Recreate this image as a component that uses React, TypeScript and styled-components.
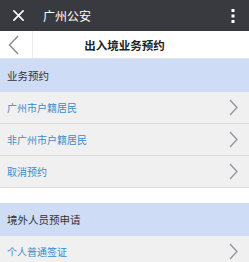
import styled, { createGlobalStyle } from "styled-components";

const GlobalStyle = createGlobalStyle`
  html, body {
    margin: 0;
    padding: 0;
    background: #ffffff;
  }
  body {
    font-family: "Noto Sans CJK SC", "Noto Sans", sans-serif;
  }
`;

type Item = { label: string };

const groups: { title: string; items: Item[] }[] = [
  {
    title: "业务预约",
    items: [{ label: "广州市户籍居民" }, { label: "非广州市户籍居民" }, { label: "取消预约" }],
  },
  {
    title: "境外人员预申请",
    items: [{ label: "个人普通签证" }],
  },
];

export default function App() {
  return (
    <Page>
      <GlobalStyle />
      <TopBar>
        <CloseIcon viewBox="0 0 12 12">
          <path d="M1 1 L11 11 M11 1 L1 11" stroke="#fff" strokeWidth="1.8" strokeLinecap="round" />
        </CloseIcon>
        <AppTitle>广州公安</AppTitle>
        <MoreIcon viewBox="0 0 4 16">
          <rect x="0.5" y="1" width="3" height="3" fill="#fff" />
          <rect x="0.5" y="6.5" width="3" height="3" fill="#fff" />
          <rect x="0.5" y="12" width="3" height="3" fill="#fff" />
        </MoreIcon>
      </TopBar>
      <NavBar>
        <BackButton>
          <svg width="11" height="20" viewBox="0 0 11 20">
            <path d="M10 1 L1.5 10 L10 19" fill="none" stroke="#8a8a8a" strokeWidth="1.4" />
          </svg>
        </BackButton>
        <NavTitle>出入境业务预约</NavTitle>
        <NavSpacer />
      </NavBar>
      {groups.map((group, gi) => (
        <Group key={group.title} $first={gi === 0}>
          <GroupHeader>{group.title}</GroupHeader>
          {group.items.map((item) => (
            <Row key={item.label}>
              <RowLabel>{item.label}</RowLabel>
              <svg width="9" height="17" viewBox="0 0 9 17">
                <path d="M1 1 L8 8.5 L1 16" fill="none" stroke="#8f949c" strokeWidth="1.3" />
              </svg>
            </Row>
          ))}
        </Group>
      ))}
    </Page>
  );
}

const Page = styled.div`
  width: 249px;
  height: 262px;
  overflow: hidden;
  background: #ffffff;
`;

const TopBar = styled.div`
  height: 31px;
  background: #393a3f;
  display: flex;
  align-items: center;
  padding: 0 14px 0 13px;
`;

const CloseIcon = styled.svg`
  width: 11px;
  height: 11px;
  flex: none;
`;

const AppTitle = styled.div`
  margin-left: 19px;
  flex: 1;
  color: #ffffff;
  font-size: 12px;
  line-height: 1;
`;

const MoreIcon = styled.svg`
  width: 4px;
  height: 16px;
  flex: none;
`;

const NavBar = styled.div`
  height: 27px;
  display: flex;
  align-items: center;
  background: #ffffff;
  border-bottom: 1px solid #e2e2e2;
`;

const BackButton = styled.div`
  width: 33px;
  height: 100%;
  display: flex;
  align-items: center;
  padding-left: 8px;
  box-sizing: border-box;
  border-right: 1px solid #ececec;
`;

const NavTitle = styled.div`
  flex: 1;
  text-align: center;
  font-size: 11.5px;
  font-weight: 700;
  color: #222222;
`;

const NavSpacer = styled.div`
  width: 33px;
`;

const Group = styled.div<{ $first: boolean }>`
  margin-top: ${(p) => (p.$first ? "0" : "15px")};
  border-bottom: 1px solid #dcdcdc;
`;

const GroupHeader = styled.div`
  height: 33px;
  display: flex;
  align-items: center;
  padding-left: 7px;
  background: #cedcf6;
  color: #333333;
  font-size: 10.5px;
`;

const Row = styled.div`
  height: 31px;
  display: flex;
  align-items: center;
  justify-content: space-between;
  padding: 0 11px 0 7px;
  background: #f0f0f0;
  border-bottom: 1px solid #dcdcdc;

  &:last-child {
    border-bottom: none;
  }
`;

const RowLabel = styled.span`
  color: #3a8ccc;
  font-size: 10px;
`;
